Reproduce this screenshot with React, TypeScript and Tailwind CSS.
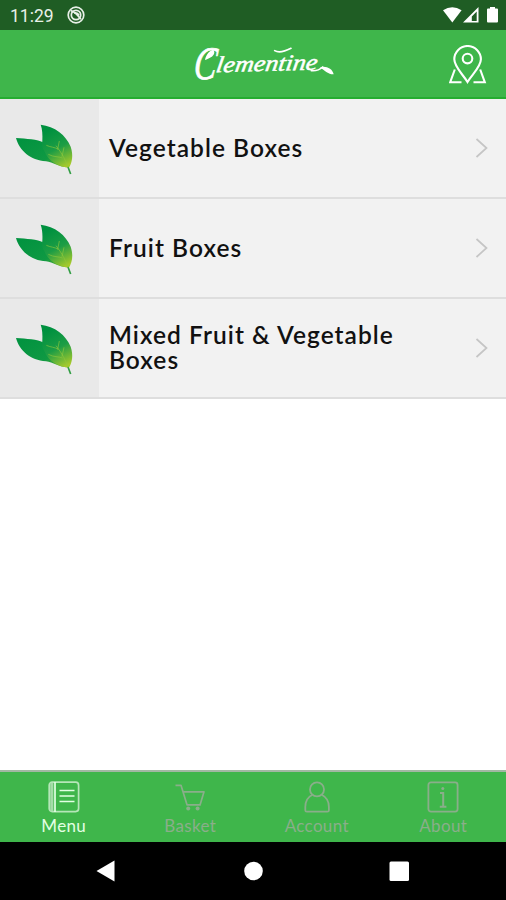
import React, { useState } from "react";

const BOXES = [
  { id: "veg", title: "Vegetable Boxes" },
  { id: "fruit", title: "Fruit Boxes" },
  { id: "mixed", title: "Mixed Fruit & Vegetable Boxes" },
];

const TABS = [
  { label: "Menu", Icon: MenuIcon },
  { label: "Basket", Icon: BasketIcon },
  { label: "Account", Icon: AccountIcon },
  { label: "About", Icon: AboutIcon },
];

function MenuIcon() {
  return (
    <svg width="32" height="32" viewBox="0 0 32 32" fill="none" stroke="currentColor" strokeWidth="1.7">
      <rect x="1.2" y="1.2" width="29.4" height="29.4" rx="3" stroke="#b5e6b8" />
      <path d="M3.8 2v28" stroke="#a5dca9" strokeWidth="3.2" />
      <path d="M7 1v30M11.5 9.5H26.5M11.5 15H26.5M11.5 20.5H26.5" />
    </svg>
  );
}

function BasketIcon() {
  return (
    <svg width="32" height="32" viewBox="0 0 32 32" fill="none" stroke="currentColor" strokeWidth="1.7">
      <path d="M1.5 4.3H7l6 19.5h13.8M8.8 10.8h21.2l-3.8 12.8" strokeLinejoin="round" />
      <circle cx="14.2" cy="27.6" r="2" fill="currentColor" stroke="none" />
      <circle cx="23.6" cy="27.6" r="2" fill="currentColor" stroke="none" />
    </svg>
  );
}

function AccountIcon() {
  return (
    <svg width="32" height="32" viewBox="0 0 32 32" fill="none" stroke="currentColor" strokeWidth="1.8">
      <circle cx="16" cy="8.4" r="7" />
      <path d="M11.4 13.8C7 16 4.3 20.2 4.3 26v3.2q0 1.5 1.5 1.5h20.6q1.5 0 1.5-1.5V26c0-5.8-2.8-10-7.2-12.2" />
    </svg>
  );
}

function AboutIcon() {
  return (
    <svg width="32" height="32" viewBox="0 0 32 32" fill="none" stroke="currentColor" strokeWidth="1.8">
      <rect x="1.4" y="1.4" width="29.2" height="29.2" rx="2.5" />
      <path d="M13 12h3.2v13.5M12.8 25.8h6.6" strokeWidth="2" />
      <circle cx="15.8" cy="7.6" r="1.5" fill="currentColor" stroke="none" />
    </svg>
  );
}

function Logo() {
  return (
    <svg width="170" height="60" viewBox="0 0 510 180" fill="#fff" aria-label="Clementine">
      <g fontFamily="'Liberation Serif', serif" fontStyle="italic">
        <text
          fontSize="140"
          textLength="68"
          lengthAdjust="spacingAndGlyphs"
          stroke="#fff"
          strokeWidth="2"
          transform="translate(38 136) skewX(-6)"
        >
          C
        </text>
        <text
          fontSize="68"
          textLength="304"
          lengthAdjust="spacingAndGlyphs"
          stroke="#fff"
          strokeWidth="1.5"
          transform="translate(106 115) rotate(-1.5) skewX(-10)"
        >
          lementine
        </text>
      </g>
      {/* swash, crossbar and leaf tail */}
      <path d="M75 78c5-24 28-40 28-22-2 12-16 17-28 22Z" />
      <path d="M284 50q16 10 49-7" fill="none" stroke="#fff" strokeWidth="5" strokeLinecap="round" />
      <path d="M394 110q20 2 34-11" fill="none" stroke="#fff" strokeWidth="5" strokeLinecap="round" />
      <path d="M420 100c16-6 38 3 41 21-15 1-24-9-41-21Z" />
    </svg>
  );
}

function Leaves() {
  return (
    <svg width="99" height="98" viewBox="0 12 297 294">
      <defs>
        <linearGradient id="leafBack" x1="0" y1="0" x2="1" y2="1">
          <stop offset="0" stopColor="#00923f" />
          <stop offset="0.65" stopColor="#0f9943" />
          <stop offset="1" stopColor="#79b82d" />
        </linearGradient>
        <linearGradient id="leafFront" x1="0.3" y1="0" x2="0.7" y2="1">
          <stop offset="0.1" stopColor="#00913f" />
          <stop offset="0.55" stopColor="#1c9d45" />
          <stop offset="1" stopColor="#a5c92b" />
        </linearGradient>
      </defs>
      <path d="M48 129c32 3 63 2 84 15 26 12 52 44 72 73-25 1-45-15-66-18-47-3-80-33-90-70Z" fill="url(#leafBack)" />
      <path d="M122 89c42 5 76 31 90 66 9 27 4 48-5 63-25-2-61-15-74-50-7-10-8-20-6-30 1-20 0-35-5-49Z" fill="url(#leafFront)" />
      <path d="M204 216l8 21" stroke="#319d43" strokeWidth="5" fill="none" />
      <path
        d="M204 218c-8-25-18-43-36-66M173 163l5-25M186 185l6-28M175 163c-11-7-23-6-36-12M188 189c-13-5-26-2-43-11"
        fill="none"
        stroke="#91c63c"
        strokeWidth="2.2"
        strokeOpacity="0.85"
      />
    </svg>
  );
}

function StatusBar() {
  return (
    <div className="h-[30px] shrink-0 bg-[#1f5d24] text-[#e8f0e8] flex items-center justify-between pl-[10px] pr-[7px]">
      <div className="flex items-center gap-[13px]">
        <span className="font-[Roboto] text-[17.5px] leading-none pt-[3px]">11:29</span>
        <svg width="18" height="18" viewBox="0 0 18 18" fill="none" stroke="currentColor">
          <circle cx="9" cy="9" r="7.8" strokeWidth="1.7" />
          <circle cx="9" cy="9" r="4.7" strokeWidth="1.7" />
          <path d="M3.7 4.6q4.5 1 10.2 8.6M7 7.2q3.5-1 5 2.2" strokeWidth="1.8" />
        </svg>
      </div>
      <svg width="56" height="18" viewBox="0 0 56 18" fill="#fff">
        <path d="M0 4.2Q9.3-1.8 18.6 4.2L9.3 16.5Z" />
        <path d="M35.5 1v15.5H20ZM28.8 10.5v4.4h4.9V5.6Z" fillRule="evenodd" />
        <path d="M47 1h5v1.5h2q1 0 1 1V15.500q0 1-1 1h-9q-1 0-1-1V3.500q0-1 1-1h2Z" />
      </svg>
    </div>
  );
}

export default function App() {
  const [active, setActive] = useState("Menu");

  return (
    <div className="w-full h-screen flex flex-col overflow-hidden bg-white font-[Lato,sans-serif]">
      <StatusBar />

      {/* Header */}
      <header className="h-[69px] shrink-0 bg-[#3fb64b] border-b-2 border-[#25ad30] flex items-center justify-between pl-[180px] pr-[19px]">
        <Logo />
        <button className="mt-[2px]" aria-label="Store locations">
          <svg width="38" height="40" viewBox="0 0 38 40" fill="none" stroke="#fff" strokeWidth="2.1">
            <path d="M18.500 37C14 29.500 5.300 22 5.300 14.300a13.300 13.300 0 0 1 26.600 0C31.900 22 23 29.500 18.500 37Z" />
            <circle cx="18.500" cy="13.600" r="4.800" />
            <path d="M5.800 24.500L1.200 37.200h11.300M24.500 37.200h11.300l-4.600-12.700" />
          </svg>
        </button>
      </header>

      {/* Category list */}
      <main className="flex-1">
        {BOXES.map((box) => (
          <button
            key={box.id}
            className="w-full h-[100px] flex items-stretch text-left bg-[#f2f2f2] border-b-2 border-[#dedede]"
          >
            <span className="w-[99px] shrink-0 bg-[#e9e9e9]">
              <Leaves />
            </span>
            <span className="w-[320px] pl-[10px] pb-[2px] self-center text-[24.5px] leading-[25px] font-semibold tracking-[1.05px] text-[#111]">
              {box.title}
            </span>
            <svg className="ml-auto mr-[16px] self-center" width="16" height="22" viewBox="0 0 16 22" fill="none">
              <path d="M2.500 2l10 9-10 9" stroke="#c5c5c5" strokeWidth="1.700" />
            </svg>
          </button>
        ))}
      </main>

      {/* Tab bar */}
      <nav className="h-[72px] shrink-0 grid grid-cols-4 bg-[#3fb64b] border-t-2 border-[#a2b8a3]">
        {TABS.map(({ label, Icon }) => (
          <button
            key={label}
            onClick={() => setActive(label)}
            className={`flex flex-col items-center pt-[9px] pl-px ${active === label ? "text-[#e2ffe3]" : "text-[#8aae8a]"}`}
          >
            <Icon />
            <span className="mt-[3px] text-[17px] leading-[20px] tracking-[0.350px]">{label}</span>
          </button>
        ))}
      </nav>

      {/* Android navigation */}
      <div className="h-[58px] shrink-0 bg-black flex items-center justify-center">
        <svg width="314" height="22" viewBox="0 0 314 22" fill="#fff">
          <path d="M0.500 11L18.500 0.500v21Z" />
          <circle cx="157.500" cy="11" r="9.300" />
          <rect x="293.500" y="1.500" width="19.500" height="19.500" rx="1.500" />
        </svg>
      </div>
    </div>
  );
}
